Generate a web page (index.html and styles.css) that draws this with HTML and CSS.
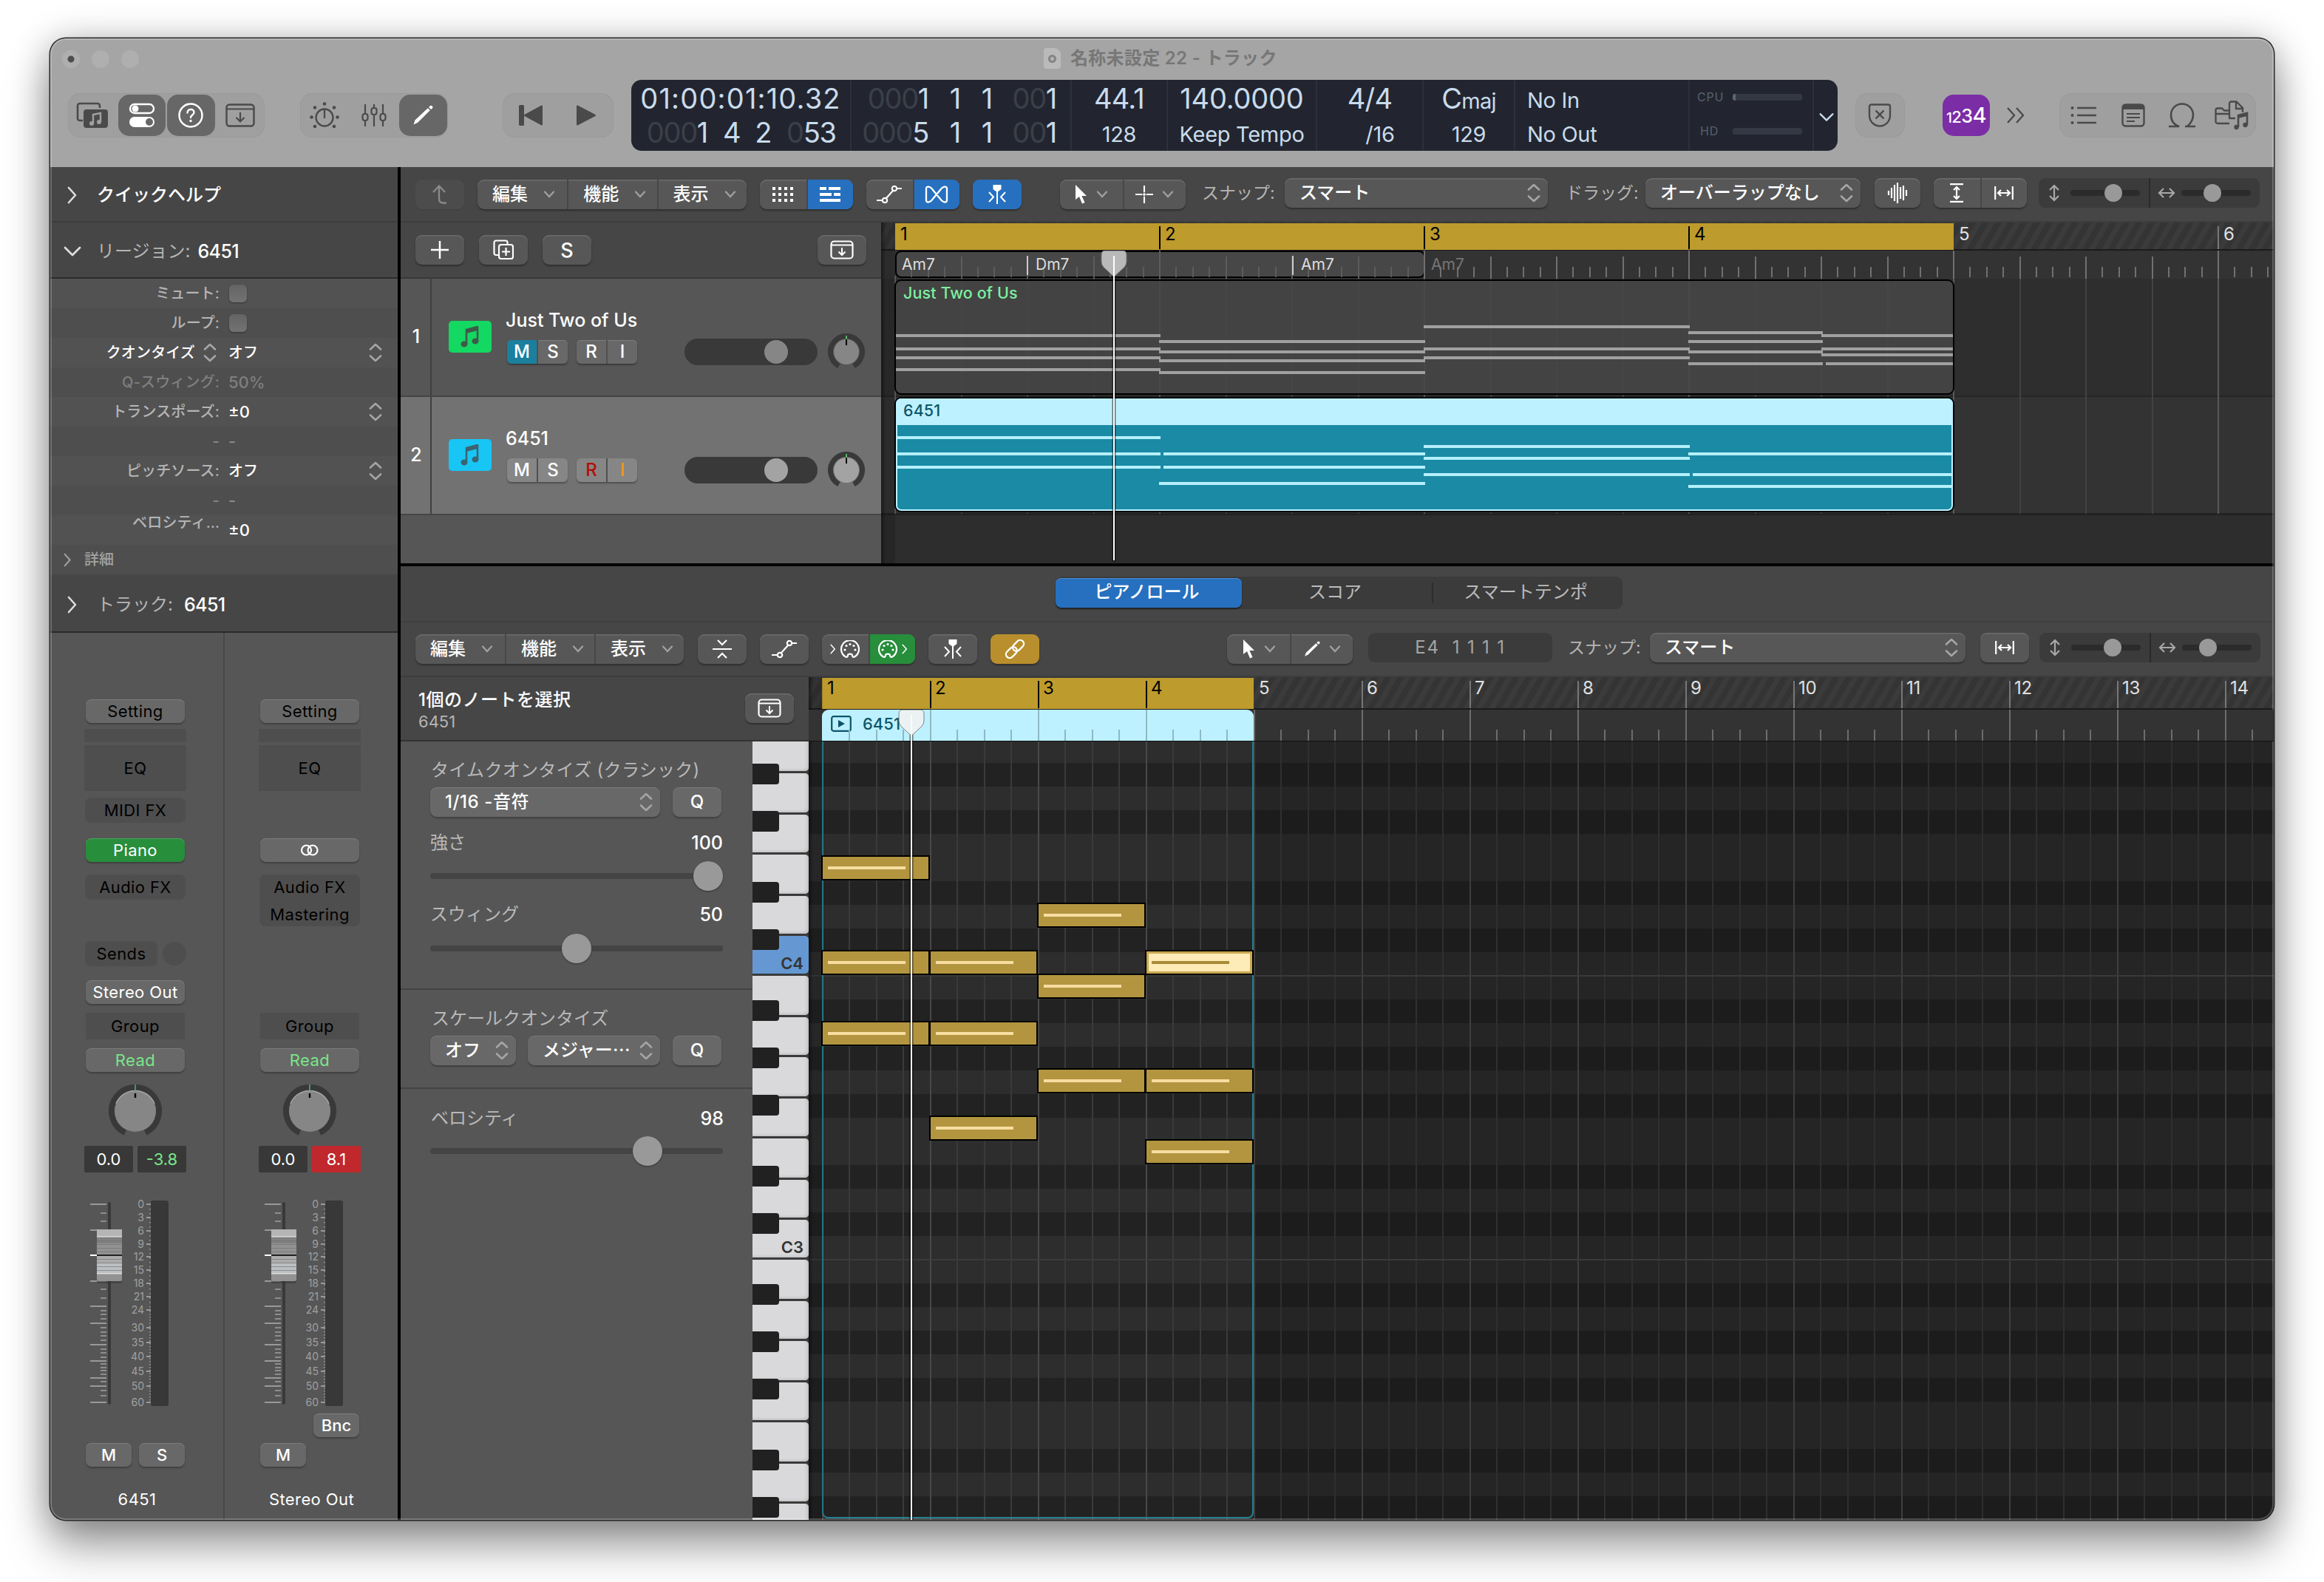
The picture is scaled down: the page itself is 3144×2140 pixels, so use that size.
FILE: index.html
```html
<!DOCTYPE html>
<html lang="ja">
<head>
    <meta charset="utf-8">
    <title>名称未設定 22 - トラック</title>
    <link rel="stylesheet" href="styles.css">
</head>
<body>
<!-- Icon sprite -->
<svg class="sprite">
    <symbol id="right" viewBox="0 0 14 24"><path d="M2 2l9 10-9 10" fill="none" stroke="currentColor" stroke-width="2.6" stroke-linecap="round" stroke-linejoin="round"/></symbol>
    <symbol id="down" viewBox="0 0 24 14"><path d="M2 2l10 10L22 2" fill="none" stroke="currentColor" stroke-width="2.8" stroke-linecap="round" stroke-linejoin="round"/></symbol>
    <symbol id="step" viewBox="0 0 18 26"><path d="M2 8.500l7-6.500 7 6.500M2 17.500l7 6.500 7-6.500" fill="none" stroke="currentColor" stroke-width="2.600" stroke-linecap="round" stroke-linejoin="round"/></symbol>
    <symbol id="library" viewBox="0 0 44 36"><path d="M9 25H5a3 3 0 0 1-3-3V5a3 3 0 0 1 3-3h24a3 3 0 0 1 3 3v3" fill="none" stroke="currentColor" stroke-width="2.6"/><rect x="10" y="10" width="33" height="25" rx="4" fill="currentColor"/><path d="M23 29V17l10-2v12" fill="none" stroke="#a0a0a0" stroke-width="2.4"/><circle cx="21" cy="29" r="3" fill="#a0a0a0"/><circle cx="31" cy="27" r="3" fill="#a0a0a0"/></symbol>
    <symbol id="toggles" viewBox="0 0 36 34"><rect x="2" y="2" width="32" height="12" rx="6" fill="none" stroke="#fff" stroke-width="2.4"/><circle cx="9" cy="8" r="4.500" fill="#fff"/><rect x="1" y="19" width="34" height="14" rx="7" fill="#fff"/><circle cx="28" cy="26" r="5" fill="#676767"/></symbol>
    <symbol id="help" viewBox="0 0 36 36"><circle cx="18" cy="18" r="15.500" fill="none" stroke="#fff" stroke-width="2.500"/><path d="M13.500 14.500c0-6 9-6 9-.500 0 3.500-4.500 3.500-4.500 7" fill="none" stroke="#fff" stroke-width="2.400" stroke-linecap="round"/><circle cx="18" cy="25.500" r="1.700" fill="#fff"/></symbol>
    <symbol id="tray" viewBox="0 0 40 32"><rect x="1.500" y="1.500" width="37" height="29" rx="4" fill="none" stroke="currentColor" stroke-width="2.400"/><path d="M2 7.500h36M20 12v12M14.500 19l5.500 5.500 5.500-5.500" fill="none" stroke="currentColor" stroke-width="2.200"/></symbol>
    <symbol id="traysm" viewBox="0 0 32 26"><rect x="1.500" y="1.500" width="29" height="23" rx="4" fill="none" stroke="currentColor" stroke-width="2.200"/><path d="M2 6.500h28M16 10v9M11.500 15.500l4.500 4.500 4.500-4.500" fill="none" stroke="currentColor" stroke-width="2"/></symbol>
    <symbol id="dial" viewBox="0 0 40 36"><circle cx="20" cy="21" r="11.500" fill="none" stroke="currentColor" stroke-width="2.300"/><path d="M20 11v11" stroke="currentColor" stroke-width="2.300"/><g fill="currentColor"><circle cx="20" cy="2.500" r="2.300"/><circle cx="7" cy="7.500" r="2.300"/><circle cx="33" cy="7.500" r="2.300"/><circle cx="2.500" cy="20.500" r="2.300"/><circle cx="37.500" cy="20.500" r="2.300"/><circle cx="7" cy="33" r="2.300"/><circle cx="33" cy="33" r="2.300"/></g></symbol>
    <symbol id="mixer" viewBox="0 0 34 32"><path d="M5 1v13M5 22v9M17 1v5M17 14v17M29 1v13M29 22v9" stroke="currentColor" stroke-width="2.200" fill="none"/><g fill="none" stroke="currentColor" stroke-width="2.200"><rect x="1.500" y="14" width="7" height="9" rx="3"/><rect x="13.500" y="6" width="7" height="9" rx="3"/><rect x="25.500" y="14" width="7" height="9" rx="3"/></g></symbol>
    <symbol id="pencil" viewBox="0 0 28 28"><path d="M1.500 26.500l2-6L20.800 4.200l3 3L7.200 23.700z" fill="currentColor"/><path d="M22 3l1.500-1.500a2.200 2.200 0 0 1 3.200 3.200L25 6z" fill="currentColor"/></symbol>
    <symbol id="rewind" viewBox="0 0 34 28"><rect x="1" y="0" width="7" height="28" rx="1.500" fill="currentColor"/><path d="M32 1.500v25L9 14z" fill="currentColor" stroke="currentColor" stroke-width="2" stroke-linejoin="round"/></symbol>
    <symbol id="play" viewBox="0 0 28 28"><path d="M2 1.500v25L26 14z" fill="currentColor" stroke="currentColor" stroke-width="2" stroke-linejoin="round"/></symbol>
    <symbol id="shield" viewBox="0 0 32 32"><path d="M4.500 1.500h23a2.500 2.500 0 0 1 2.500 2.500v12c0 9-7 14.500-14 14.500S2 25 2 16V4a2.500 2.500 0 0 1 2.500-2.500zM10.500 9.500l11 11M21.500 9.500l-11 11" fill="none" stroke="currentColor" stroke-width="2.400"/></symbol>
    <symbol id="more" viewBox="0 0 26 24"><path d="M2 2l9 10-9 10M14 2l9 10-9 10" fill="none" stroke="currentColor" stroke-width="2.300"/></symbol>
    <symbol id="list" viewBox="0 0 36 26"><path d="M9 3h26M9 13h26M9 23h26" stroke="currentColor" stroke-width="2.600"/><g fill="currentColor"><circle cx="2.500" cy="3" r="2"/><circle cx="2.500" cy="13" r="2"/><circle cx="2.500" cy="23" r="2"/></g></symbol>
    <symbol id="notepad" viewBox="0 0 32 32"><rect x="1.500" y="1.500" width="29" height="29" rx="4" fill="none" stroke="currentColor" stroke-width="2.400"/><path d="M2 2h28v6H2z" fill="currentColor"/><path d="M7 14h18M7 19h18M7 24h11" stroke="currentColor" stroke-width="2"/></symbol>
    <symbol id="loop" viewBox="0 0 38 34"><path d="M1 32h14c-6-2-11-7-11-15.500C4 8 10.500 1.500 19 1.500S34 8 34 16.500c0 7-4 12-8 15.500M23 32h14" fill="none" stroke="currentColor" stroke-width="2.600"/></symbol>
    <symbol id="media" viewBox="0 0 46 40"><path d="M20 31H4a2.500 2.500 0 0 1-2.500-2.500V13A2.500 2.500 0 0 1 4 10.500h6l3 3h6M2 18h17M20 25V4a2.500 2.500 0 0 1 2.500-2.500h7L38 10v6M29 2v9h8M20 24h8" fill="none" stroke="currentColor" stroke-width="2.300"/><path d="M32 36V20l12-3v16" fill="none" stroke="currentColor" stroke-width="2.600"/><path d="M32 20l12-3v4l-12 3z" fill="currentColor"/><circle cx="29.500" cy="36" r="3.200" fill="currentColor"/><circle cx="41.500" cy="33" r="3.200" fill="currentColor"/></symbol>
    <symbol id="back" viewBox="0 0 22 26"><path d="M10 1.500V19c0 3.500 2 5.500 6 5.500h4M2 10l8-8.500 8 8.500" fill="none" stroke="currentColor" stroke-width="2.300"/></symbol>
    <symbol id="caret" viewBox="0 0 16 10"><path d="M2 1.500l6 6.500 6-6.500" fill="none" stroke="currentColor" stroke-width="2.300" stroke-linecap="round"/></symbol>
    <symbol id="dots" viewBox="0 0 28 20"><g fill="currentColor"><path d="M0 0h4v4H0zM8 0h4v4H8zM16 0h4v4h-4zM24 0h4v4h-4zM0 8h4v4H0zM8 8h4v4H8zM16 8h4v4h-4zM24 8h4v4h-4zM0 16h4v4H0zM8 16h4v4H8zM16 16h4v4h-4zM24 16h4v4h-4z"/></g></symbol>
    <symbol id="rows" viewBox="0 0 28 20"><path d="M0 0h9v4H0zM12 0h16v4H12zM0 8h16v4H0zM19 8h9v4h-9zM0 16h28v4H0z" fill="currentColor"/></symbol>
    <symbol id="auto" viewBox="0 0 34 24"><g fill="none" stroke="currentColor" stroke-width="2.200"><path d="M0 20h8M13 17L22 7M27 4h7"/><circle cx="11" cy="20" r="3.200"/><circle cx="24" cy="4" r="3.200"/></g></symbol>
    <symbol id="flex" viewBox="0 0 32 24"><path d="M2 4c0-4 6-3 9 2l10 12c3 5 9 6 9 2V4c0-4-6-3-9 2L11 18c-3 5-9 6-9 2z" fill="none" stroke="currentColor" stroke-width="2.300"/></symbol>
    <symbol id="catch" viewBox="0 0 26 26"><path d="M7.500 0h11v6L13 10 7.500 6z" fill="currentColor"/><path d="M13 6v20M2 10l6 6.500L2 23M24 10l-6 6.500 6 6.500" fill="none" stroke="currentColor" stroke-width="2"/></symbol>
    <symbol id="pointer" viewBox="0 0 18 26"><path d="M2 0v20l5-4 4 9.500 3.500-1.500-4-9h6.500z" fill="currentColor"/></symbol>
    <symbol id="cross" viewBox="0 0 26 26"><path d="M0 13h10M16 13h10M13 0v10M13 16v10" stroke="currentColor" stroke-width="2.300"/><circle cx="13" cy="13" r="2" fill="currentColor"/></symbol>
    <symbol id="wave" viewBox="0 0 28 28"><path d="M2 11v6M6 7v14M10 3v22M14 0v28M18 6v16M22 4v20M26 10v8" stroke="currentColor" stroke-width="2.200"/></symbol>
    <symbol id="vfit" viewBox="0 0 20 26"><path d="M1 1.200h18M1 24.800h18M10 5v16M6 9l4-4 4 4M6 17l4 4 4-4" fill="none" stroke="currentColor" stroke-width="2.200"/></symbol>
    <symbol id="hfit" viewBox="0 0 26 20"><path d="M1.200 1v18M24.800 1v18M5 10h16M9 6l-4 4 4 4M17 6l4 4-4 4" fill="none" stroke="currentColor" stroke-width="2.200"/></symbol>
    <symbol id="vzoom" viewBox="0 0 16 24"><path d="M8 2v20M2 8l6-6 6 6M2 16l6 6 6-6" fill="none" stroke="currentColor" stroke-width="2.200"/></symbol>
    <symbol id="hzoom" viewBox="0 0 24 16"><path d="M2 8h20M8 2L2 8l6 6M16 2l6 6-6 6" fill="none" stroke="currentColor" stroke-width="2.200"/></symbol>
    <symbol id="plus" viewBox="0 0 22 22"><path d="M11 0v22M0 11h22" stroke="currentColor" stroke-width="2.300"/></symbol>
    <symbol id="dup" viewBox="0 0 28 28"><path d="M7 21H4a2.500 2.500 0 0 1-2.500-2.500V4A2.500 2.500 0 0 1 4 1.500h13A2.500 2.500 0 0 1 19.500 4v3" fill="none" stroke="currentColor" stroke-width="2.200"/><rect x="8" y="7" width="19" height="19" rx="3" fill="none" stroke="currentColor" stroke-width="2.200"/><path d="M17.500 11v11M12 16.500h11" stroke="currentColor" stroke-width="2.200"/></symbol>
    <symbol id="note" viewBox="0 0 26 30"><path d="M8 24V5l15-4v19" fill="none" stroke="currentColor" stroke-width="2.600"/><path d="M8 5l15-4v5L8 10z" fill="currentColor"/><ellipse cx="5" cy="24.500" rx="4.500" ry="4" fill="currentColor"/><ellipse cx="20" cy="20.500" rx="4.500" ry="4" fill="currentColor"/></symbol>
    <symbol id="collapse" viewBox="0 0 26 26"><path d="M0 13h26M7 1l6 6 6-6M7 25l6-6 6 6" fill="none" stroke="currentColor" stroke-width="2.200"/></symbol>
    <symbol id="midi" viewBox="0 0 28 24"><path d="M8 22.500A12 12 0 1 1 20 22.500c-2 1-3-.500-3-2 0-2.500-6-2.500-6 0 0 1.500-1 3-3 2z" fill="none" stroke="currentColor" stroke-width="2.200"/><g fill="currentColor"><circle cx="14" cy="5.500" r="1.600"/><circle cx="9" cy="7.500" r="1.600"/><circle cx="19" cy="7.500" r="1.600"/><circle cx="7" cy="13" r="1.600"/><circle cx="21" cy="13" r="1.600"/></g></symbol>
    <symbol id="link" viewBox="0 0 28 28"><g fill="none" stroke="currentColor" stroke-width="2.300" transform="rotate(-45 14 14)"><rect x="-1" y="9" width="17" height="10" rx="5"/><rect x="12" y="9" width="17" height="10" rx="5"/></g></symbol>
    <symbol id="rings" viewBox="0 0 26 16"><circle cx="8.500" cy="8" r="6.500" fill="none" stroke="#fff" stroke-width="2.200"/><circle cx="17" cy="8" r="6.500" fill="none" stroke="#fff" stroke-width="2.200"/></symbol>
    <symbol id="playbox" viewBox="0 0 28 22"><rect x="1.200" y="1.200" width="25.600" height="19.600" rx="2.500" fill="none" stroke="currentColor" stroke-width="2.200"/><path d="M10 6v10l9-5z" fill="currentColor"/></symbol>
    <symbol id="head" viewBox="0 0 36 36"><path d="M6 0h24q5 0 5 6v9q0 4-3 7.500L18 35.500 4 22.500Q1 19 1 15V6q0-6 5-6z" fill="currentColor" stroke="#777" stroke-width="1"/><path d="M18 7v29" stroke="#fff" stroke-width="2"/></symbol>
    <symbol id="knob" viewBox="-36 -36 72 72"><path d="M-13.500 29A32 32 0 1 1 13.500 29" fill="none" stroke="#393939" stroke-width="8"/><circle r="28" fill="#868686"/><path d="M-26-10A28 28 0 0 1 26-10" fill="none" stroke="#a5a5a5" stroke-width="1.500"/><path d="M0-36v9" stroke="#5fae6c" stroke-width="1.500"/><path d="M0-24v6" stroke="#000" stroke-width="2.400"/></symbol>
    <symbol id="pan" viewBox="-26 -26 52 52"><path d="M-10 19A21.500 21.500 0 1 1 10 19" fill="none" stroke="#393939" stroke-width="7"/><circle r="17" fill="currentColor"/><path d="M0-22v5" stroke="#5fd273" stroke-width="1.600"/><path d="M0-17v8" stroke="#000" stroke-width="2"/></symbol>
</svg>

<div class="window">
    <!-- Title bar + control bar -->
    <header class="titlebar">
        <div class="title-row">
            <div class="lights"><i class="edited"></i><i></i><i></i></div>
            <div class="doc-title"><span class="doc-icon"></span><span>名称未設定 22 - トラック</span></div>
        </div>
        <div class="controlbar">
            <div class="cb-group g1">
                <span class="cb"><svg width="44" height="36"><use href="#library"/></svg></span>
                <span class="cb on"><svg width="36" height="34"><use href="#toggles"/></svg></span>
                <span class="cb on"><svg width="36" height="36"><use href="#help"/></svg></span>
                <span class="cb"><svg width="40" height="32"><use href="#tray"/></svg></span>
            </div>
            <div class="cb-group g2">
                <span class="cb"><svg width="40" height="36"><use href="#dial"/></svg></span>
                <span class="cb"><svg width="34" height="32"><use href="#mixer"/></svg></span>
                <span class="cb on"><svg width="28" height="28"><use href="#pencil"/></svg></span>
            </div>
            <div class="cb-group g3">
                <span class="cb wide"><svg width="34" height="28"><use href="#rewind"/></svg></span>
                <span class="cb wide"><svg width="28" height="28"><use href="#play"/></svg></span>
            </div>
            <div class="lcd">
                <div class="cell c-time">
                    <div class="big smpte">01:00:01:10.32</div>
                    <div class="pos"><b class="q"><s>000</s>1</b><b>4</b><b>2</b><b class="t"><s>0</s>53</b></div>
                </div>
                <div class="cell c-loc">
                    <div class="pos"><b class="q"><s>000</s>1</b><b>1</b><b>1</b><b class="t"><s>00</s>1</b></div>
                    <div class="pos"><b class="q"><s>000</s>5</b><b>1</b><b>1</b><b class="t"><s>00</s>1</b></div>
                </div>
                <div class="cell c-rate"><div class="big">44.1</div><div class="small">128</div></div>
                <div class="cell c-tempo"><div class="big">140.0000</div><div class="small">Keep Tempo</div></div>
                <div class="cell c-sig"><div class="big">4/4</div><div class="small">/16</div></div>
                <div class="cell c-key"><div class="big">C<span class="maj">maj</span></div><div class="small">129</div></div>
                <div class="cell c-io"><div class="small io">No In</div><div class="small">No Out</div></div>
                <div class="cell c-load">
                    <div class="load"><span>CPU</span><i class="cpu"></i></div>
                    <div class="load"><span>HD</span><i></i></div>
                </div>
                <div class="c-more"><svg width="20" height="13"><use href="#down"/></svg></div>
            </div>
            <div class="cb-group g4"><span class="cb"><svg width="32" height="32"><use href="#shield"/></svg></span></div>
            <div class="countin"><span>1</span><span>2</span><span>3</span><span>4</span></div>
            <svg class="more" width="26" height="24"><use href="#more"/></svg>
            <div class="cb-group g5">
                <span class="cb"><svg width="36" height="26"><use href="#list"/></svg></span>
                <span class="cb"><svg width="32" height="32"><use href="#notepad"/></svg></span>
                <span class="cb"><svg width="38" height="34"><use href="#loop"/></svg></span>
                <span class="cb"><svg width="46" height="40"><use href="#media"/></svg></span>
            </div>
        </div>
    </header>

    <div class="content">
        <!-- Inspector -->
        <aside class="inspector">
            <div class="sec-head"><svg class="ic-r" width="14" height="24"><use href="#right"/></svg><span class="w">クイックヘルプ</span></div>
            <div class="sec-head open"><svg class="ic-d" width="24" height="14"><use href="#down"/></svg><span>リージョン:</span><b>6451</b></div>
            <div class="params">
                <div class="prow"><label>ミュート:</label><i class="check"></i></div>
                <div class="prow"><label>ループ:</label><i class="check"></i></div>
                <div class="prow"><label class="menu">クオンタイズ<svg width="18" height="26"><use href="#step"/></svg></label><em class="jp">オフ</em><svg class="st" width="18" height="26"><use href="#step"/></svg></div>
                <div class="prow off"><label>Q-スウィング:</label><em>50%</em></div>
                <div class="prow"><label>トランスポーズ:</label><em>±0</em><svg class="st" width="18" height="26"><use href="#step"/></svg></div>
                <div class="prow dash"><label>-</label><em>-</em></div>
                <div class="prow"><label>ピッチソース:</label><em class="jp">オフ</em><svg class="st" width="18" height="26"><use href="#step"/></svg></div>
                <div class="prow dash"><label>-</label><em>-</em></div>
                <div class="prow"><label class="raise">ベロシティ…</label><em>±0</em></div>
                <div class="prow detail"><svg width="11" height="19"><use href="#right"/></svg><span>詳細</span></div>
            </div>
            <div class="sec-head track-head"><svg class="ic-r" width="14" height="24"><use href="#right"/></svg><span>トラック:</span><b>6451</b></div>
            <div class="strips">
                <div class="strip">
                    <div class="sbtn first">Setting</div>
                    <div class="thin"></div>
                    <div class="eq">EQ</div>
                    <div class="inset midi">MIDI FX</div>
                    <div class="sbtn inst green">Piano</div>
                    <div class="fx"><div class="inset">Audio FX</div></div>
                    <div class="sends"><div class="inset">Sends</div><i></i></div>
                    <div class="sbtn out">Stereo Out</div>
                    <div class="group">Group</div>
                    <div class="sbtn read">Read</div>
                    <svg class="knob" width="72" height="72"><use href="#knob"/></svg>
                    <div class="vals"><span>0.0</span><span class="pk">-3.8</span></div>
                    <svg class="fader" width="138" height="288"></svg>
                    <div class="bnc"></div>
                    <div class="ms"><span>M</span><span>S</span></div>
                    <div class="sname">6451</div>
                </div>
                <div class="strip">
                    <div class="sbtn first">Setting</div>
                    <div class="thin"></div>
                    <div class="eq">EQ</div>
                    <div class="midi blank"></div>
                    <div class="sbtn inst"><svg width="26" height="16"><use href="#rings"/></svg></div>
                    <div class="fx"><div class="inset two"><span>Audio FX</span><span>Mastering</span></div></div>
                    <div class="sends"></div>
                    <div class="out blank"></div>
                    <div class="group">Group</div>
                    <div class="sbtn read">Read</div>
                    <svg class="knob" width="72" height="72"><use href="#knob"/></svg>
                    <div class="vals"><span>0.0</span><span class="clip">8.1</span></div>
                    <svg class="fader" width="138" height="288"></svg>
                    <div class="bnc"><span>Bnc</span></div>
                    <div class="ms"><span>M</span></div>
                    <div class="sname">Stereo Out</div>
                </div>
            </div>
        </aside>

        <main class="main">
            <!-- Tracks area -->
            <section class="tracks">
                <div class="toolbar">
                    <div class="seg ghost"><span><svg width="22" height="26"><use href="#back"/></svg></span></div>
                    <div class="seg menus"><span>編集<svg width="16" height="10"><use href="#caret"/></svg></span><span>機能<svg width="16" height="10"><use href="#caret"/></svg></span><span>表示<svg width="16" height="10"><use href="#caret"/></svg></span></div>
                    <div class="seg"><span><svg width="28" height="20"><use href="#dots"/></svg></span><span class="blue"><svg width="28" height="20"><use href="#rows"/></svg></span></div>
                    <div class="seg"><span><svg width="34" height="24"><use href="#auto"/></svg></span><span class="blue"><svg width="32" height="24"><use href="#flex"/></svg></span></div>
                    <div class="seg"><span class="blue"><svg width="26" height="26"><use href="#catch"/></svg></span></div>
                    <div class="seg tools"><span><svg width="18" height="26"><use href="#pointer"/></svg><svg width="16" height="10"><use href="#caret"/></svg></span><span><svg width="24" height="24"><use href="#cross"/></svg><svg width="16" height="10"><use href="#caret"/></svg></span></div>
                    <label class="lab snap up">スナップ:</label>
                    <div class="select snapsel up">スマート<svg width="18" height="26"><use href="#step"/></svg></div>
                    <label class="lab drag up">ドラッグ:</label>
                    <div class="select dragsel up">オーバーラップなし<svg width="18" height="26"><use href="#step"/></svg></div>
                    <div class="seg up"><span class="n62"><svg width="28" height="28"><use href="#wave"/></svg></span></div>
                    <div class="seg up"><span><svg width="20" height="26"><use href="#vfit"/></svg></span><span><svg width="26" height="20"><use href="#hfit"/></svg></span></div>
                    <div class="zoom up"><div><svg width="16" height="24"><use href="#vzoom"/></svg><i><u style="left:46px"></u></i></div><div><svg width="24" height="16"><use href="#hzoom"/></svg><i><u style="left:30px"></u></i></div></div>
                </div>
                <div class="tracks-body">
                    <div class="track-list">
                        <div class="list-head">
                            <div class="seg"><span><svg width="24" height="24"><use href="#plus"/></svg></span></div>
                            <div class="seg"><span><svg width="28" height="28"><use href="#dup"/></svg></span></div>
                            <div class="seg"><span class="ltr">S</span></div>
                            <div class="seg last"><span><svg width="32" height="26"><use href="#traysm"/></svg></span></div>
                        </div>
                        <div class="track">
                            <div class="num">1</div>
                            <div class="t-icon"><svg width="26" height="30"><use href="#note"/></svg></div>
                            <div class="t-mid"><div class="t-name">Just Two of Us</div><div class="t-btns"><p><span class="mute">M</span><span>S</span></p><p><span>R</span><span>I</span></p></div></div>
                            <div class="vol"><i></i></div>
                            <svg class="pan" width="52" height="52"><use href="#pan"/></svg>
                        </div>
                        <div class="track sel">
                            <div class="num">2</div>
                            <div class="t-icon cyan"><svg width="26" height="30"><use href="#note"/></svg></div>
                            <div class="t-mid"><div class="t-name">6451</div><div class="t-btns"><p><span>M</span><span>S</span></p><p><span class="rec">R</span><span class="inp">I</span></p></div></div>
                            <div class="vol"><i></i></div>
                            <svg class="pan" width="52" height="52"><use href="#pan"/></svg>
                        </div>
                    </div>
                    <div class="arrange" id="arrange">
                        <div class="ruler">
                            <div class="cycle"></div>
                            <div class="bars" id="arrangeBars"></div>
                        </div>
                        <div class="chords"><div class="chord-on"></div><svg class="ticks" id="chordTicks" width="1884" height="38"></svg>
                            <span style="left:28px">Am7</span><span class="tk" style="left:197px">Dm7</span><span class="tk" style="left:556px">Am7</span><span class="dim" style="left:744px">Am7</span>
                        </div>
                        <div class="lanes">
                            <svg class="grid" id="arrangeGrid" width="1884" height="320"></svg>
                            <div class="region muted"><div class="r-name">Just Two of Us</div><div class="r-notes" id="notes1"></div></div>
                            <div class="region active"><div class="r-name">6451</div><div class="r-notes" id="notes2"></div></div>
                        </div>
                        <div class="edge"></div>
                        <div class="playhead"><svg width="36" height="36"><use href="#head"/></svg><i></i></div>
                    </div>
                </div>
            </section>

            <!-- Editor -->
            <section class="editor">
                <div class="tabs"><div class="tabset"><span class="cur">ピアノロール</span><span>スコア</span><span class="div">スマートテンポ</span></div></div>
                <div class="toolbar ed">
                    <div class="seg menus"><span>編集<svg width="16" height="10"><use href="#caret"/></svg></span><span>機能<svg width="16" height="10"><use href="#caret"/></svg></span><span>表示<svg width="16" height="10"><use href="#caret"/></svg></span></div>
                    <div class="seg"><span><svg width="26" height="26"><use href="#collapse"/></svg></span></div>
                    <div class="seg"><span><svg width="34" height="24"><use href="#auto"/></svg></span></div>
                    <div class="seg"><span><svg width="8" height="14"><use href="#right"/></svg><svg width="28" height="24"><use href="#midi"/></svg></span><span class="green"><svg width="28" height="24"><use href="#midi"/></svg><svg width="8" height="14"><use href="#right"/></svg></span></div>
                    <div class="seg"><span><svg width="26" height="26"><use href="#catch"/></svg></span></div>
                    <div class="seg"><span class="gold"><svg width="28" height="28"><use href="#link"/></svg></span></div>
                    <div class="seg tools"><span><svg width="18" height="26"><use href="#pointer"/></svg><svg width="16" height="10"><use href="#caret"/></svg></span><span><svg width="22" height="22"><use href="#pencil"/></svg><svg width="16" height="10"><use href="#caret"/></svg></span></div>
                    <div class="readout up">E4&nbsp; 1 1 1 1</div>
                    <label class="lab snap2 up">スナップ:</label>
                    <div class="select snapsel2 up">スマート<svg width="18" height="26"><use href="#step"/></svg></div>
                    <div class="seg up"><span><svg width="26" height="20"><use href="#hfit"/></svg></span></div>
                    <div class="zoom up"><div><svg width="16" height="24"><use href="#vzoom"/></svg><i><u style="left:44px"></u></i></div><div><svg width="24" height="16"><use href="#hzoom"/></svg><i><u style="left:23px"></u></i></div></div>
                </div>
                <div class="ed-body">
                    <div class="ed-left">
                        <div class="ed-head">
                            <div><div class="eh-title">1個のノートを選択</div><div class="eh-sub">6451</div></div>
                            <div class="seg"><span><svg width="32" height="26"><use href="#traysm"/></svg></span></div>
                        </div>
                        <div class="ed-cols">
                            <div class="note-insp">
                                <div class="ni-label l1">タイムクオンタイズ (クラシック)</div>
                                <div class="ni-row"><div class="select big-sel">1/16 -音符<svg width="18" height="26"><use href="#step"/></svg></div><div class="qbtn">Q</div></div>
                                <div class="ni-line l2"><span>強さ</span><b>100</b></div>
                                <div class="slider"><i style="left:356px"></i></div>
                                <div class="ni-line l3"><span>スウィング</span><b>50</b></div>
                                <div class="slider"><i style="left:178px"></i></div>
                                <hr class="h1">
                                <div class="ni-label l4">スケールクオンタイズ</div>
                                <div class="ni-row r2"><div class="select s1">オフ<svg width="18" height="26"><use href="#step"/></svg></div><div class="select s2">メジャー⋯<svg width="18" height="26"><use href="#step"/></svg></div><div class="qbtn">Q</div></div>
                                <hr class="h2">
                                <div class="ni-line l5"><span>ベロシティ</span><b>98</b></div>
                                <div class="slider"><i style="left:274px"></i></div>
                            </div>
                            <div class="keys" id="keys"></div>
                        </div>
                    </div>
                    <div class="roll">
                        <div class="ruler roll-ruler">
                            <div class="cycle"></div>
                            <div class="bars" id="rollBars"></div>
                        </div>
                        <div class="strip-bar">
                            <div class="rb"><svg width="28" height="22"><use href="#playbox"/></svg>6451</div>
                            <svg class="ticks" id="rollTicks" width="1982" height="44"></svg>
                        </div>
                        <div class="roll-grid">
                            <div class="in-region"></div>
                            <svg class="grid" id="rollGrid" width="1982" height="1054"></svg>
                            <div class="bounds"></div>
                            <div id="rollNotes"></div>
                        </div>
                        <div class="edge"></div>
                        <div class="playhead ph2"><svg width="36" height="36"><use href="#head"/></svg><i></i></div>
                    </div>
                </div>
            </section>
        </main>
    </div>
</div>
<script src="script.js"></script>
</body>
</html>
```

FILE: styles.css
```css
* { box-sizing: border-box; }
body {
    margin: 0;
    width: 3144px;
    height: 2140px;
    overflow: hidden;
    background: #fff;
    font-family: Inter, "Noto Sans CJK JP", sans-serif;
    font-size: 24px;
    line-height: 1;
    color: #fff;
    white-space: nowrap;
}
svg { display: block; flex: none; }
.sprite { display: none; }
b, em, i, u, s { font-style: normal; text-decoration: none; font-weight: 500; }

.window {
    position: relative;
    width: 3008px;
    height: 2004px;
    margin: 52px 0 0 68px;
    border-radius: 21px;
    overflow: hidden;
    background: #464646;
    box-shadow: 0 0 0 1.500px #2a2a2a, 0 36px 60px rgba(0,0,0,.36), 0 4px 50px rgba(0,0,0,.28);
}
.window::after {
    content: "";
    position: absolute;
    inset: 0;
    border-radius: 21px;
    box-shadow: inset 0 0 0 2px rgba(255,255,255,.22);
}

/* Title bar */
.titlebar { height: 174px; background: #a5a5a5; }
.title-row { position: relative; height: 56px; }
.lights { display: flex; gap: 16px; padding: 16px 0 0 16px; }
.lights i { width: 24px; height: 24px; border-radius: 50%; background: #afafaf; }
.lights .edited { background: radial-gradient(circle, #4d4d4d 0 4px, #afafaf 5px); }
.doc-title {
    position: absolute;
    left: 1344px;
    top: 12px;
    height: 30px;
    display: flex;
    align-items: center;
    gap: 13px;
    color: #777;
    font-size: 24px;
    font-weight: 600;
    letter-spacing: .3px;
}
.doc-icon { width: 23px; height: 28px; border-radius: 4px 9px 4px 4px; background: radial-gradient(circle at 50% 52%, #b5b5b5 0 2px, #858585 3px 5px, #bababa 6px); }

.controlbar { display: flex; align-items: center; height: 96px; padding-left: 24px; color: #4a4a4a; }
.cb-group { display: flex; align-items: center; gap: 2px; height: 60px; padding: 0 1px; border-radius: 17px; background: #9f9f9f; box-shadow: inset 0 0 0 1px #9a9a9a; }
.cb { display: flex; align-items: center; justify-content: center; width: 64.500px; height: 56px; border-radius: 15px; }
.cb.on { background: #676767; color: #fff; }
.cb.wide { width: 73px; }
.g1 { width: 266px; }
.g2 { width: 200px; margin-left: 48px; }
.g3 { width: 150px; margin-left: 74px; }
.g4 { width: 67px; margin-left: 24px; }
.g5 { width: 266px; margin-left: 46px; }
.more { margin-left: 22px; }
.countin { display: flex; align-items: baseline; justify-content: center; width: 64px; height: 56px; margin-left: 51px; padding-top: 13px; border-radius: 15px; background: #7b2da6; color: #fff; font-weight: 500; letter-spacing: -.5px; }
.countin span:nth-child(1) { font-size: 19px; }
.countin span:nth-child(2) { font-size: 22px; }
.countin span:nth-child(3) { font-size: 25px; }
.countin span:nth-child(4) { font-size: 29px; }

/* LCD */
.lcd { display: flex; width: 1632px; height: 96px; margin-left: 24px; border-radius: 14px; background: #22252f; color: #c9dbec; }
.cell { display: flex; flex-direction: column; padding-top: 2px; border-right: 2px solid #2c303b; text-align: center; }
.cell > div { height: 46px; line-height: 46px; }
.big { font-size: 38px; letter-spacing: -.7px; }
.small { font-size: 29px; padding-top: 3px; letter-spacing: -.3px; }
.io { font-size: 29px; }
.maj { font-size: 29px; }
.pos { display: flex; font-size: 38px; }
.pos b { width: 22px; font-weight: 400; text-align: right; margin-right: 21px; letter-spacing: -1.300px; }
.pos .q { width: 90px; }
.pos .t { width: 66px; margin: 0; }
.pos s { color: #3b3f49; font-weight: 400; }
.c-time { width: 298px; }
.c-time .pos { padding-left: 13px; }
.c-loc { width: 298px; }
.c-loc .pos { padding-left: 14px; }
.cell .smpte { letter-spacing: 1.200px; }
.c-rate { width: 130px; }
.c-tempo { width: 202px; }
.c-tempo .big { letter-spacing: -.2px; }
.c-sig { width: 144px; }
.c-sig .small { padding-left: 28px; }
.c-key { width: 124px; }
.c-io { width: 236px; text-align: left; padding-left: 16px; }
.c-load { width: 168px; padding-left: 9px; padding-top: 0; color: #566170; }
.cell .load { display: flex; align-items: center; font-size: 16px; letter-spacing: .8px; }
.load span { width: 49px; text-align: left; padding-left: 1px; }
.load + .load span { padding-left: 5px; }
.load i { width: 94px; height: 9px; border-radius: 3px; background: #343844; }
.load .cpu { background: linear-gradient(90deg, #5a6675 4px, #343844 4px); }
.c-more { display: flex; align-items: center; padding: 4px 0 0 7px; }

.content { display: flex; height: 1830px; }

/* Inspector */
.inspector { width: 470px; background: #464646; }
.sec-head { display: flex; align-items: center; height: 75px; padding-top: 3px; border-bottom: 2px solid #3d3d3d; color: #b5b5b5; font-size: 24px; }
.sec-head span { margin-left: 26px; }
.sec-head .w { color: #fff; font-weight: 500; }
.sec-head svg { color: #ddd; }
.sec-head b { margin-left: 10px; font-size: 25px; color: #fff; letter-spacing: -.6px; }
.ic-r { margin-left: 23px; }
.ic-d { margin-left: 18px; }
.sec-head .ic-d + span { margin-left: 21px; }
.sec-head.open { height: 76px; padding-top: 4px; border-bottom: 2px solid #2b2b2b; }
.sec-head.track-head { height: 79px; padding-top: 5px; border-bottom: 2px solid #2b2b2b; }
.sec-head.track-head b { margin-left: 15px; }
.params { height: 400px; border-bottom: 2px solid #3d3d3d; }
.prow { position: relative; display: flex; align-items: center; height: 40px; background: #525252; }
.prow:nth-child(even) { background: #4e4e4e; }
.prow label { display: flex; align-items: center; justify-content: flex-end; width: 229px; margin-right: 12px; font-size: 20px; color: #b5b5b5; font-weight: 500; letter-spacing: .15px; }
.prow label.menu { color: #fff; }
.prow label.menu svg { margin: 0 4px 0 11px; color: #a5a5a5; }
.prow em { font-size: 22px; width: 190px; }
.prow em.jp { font-size: 20px; }
.prow .st { color: #a5a5a5; }
.prow.off, .prow.off label { color: #7f7f7f; }
.prow.dash, .prow.dash label { color: #8a8a8a; }
.prow label.raise { padding-bottom: 20px; }
.check { width: 24px; height: 24px; margin-left: 1px; border-radius: 6px; background: linear-gradient(#646464, #727272); box-shadow: 0 1px 2px #333; }
.detail { color: #a2a2a2; padding-left: 18px; font-size: 20px; font-weight: 500; }
.detail span { margin-left: 17px; }

.strips { display: flex; height: 1200px; background: #565656; }
.strip { flex: none; width: 234px; padding-left: 46px; font-size: 22px; color: #000; letter-spacing: .4px; }
.strip:first-child { width: 236px; border-right: 2px solid #474747; }
.strip > div, .strip .inset { display: flex; align-items: center; justify-content: center; width: 138px; }
.strip .sbtn { width: 134px; height: 32px; margin-left: 2px; border-radius: 8px; background: #686868; box-shadow: 0 2px 2px #404040, inset 0 1px 0 #7d7d7d; }
.strip .sbtn.first { margin-top: 90px; }
.strip .thin { height: 18px; margin-top: 8px; background: #4e4e4e; }
.strip .eq { height: 62px; margin-top: 4px; background: #4e4e4e; }
.strip .inset { width: 136px; height: 34px; margin-left: 1px; border-radius: 8px; background: #4e4e4e; }
.strip .midi { height: 34px; margin-top: 9px; }
.strip .inst { margin-top: 21px; }
.strip .sbtn.green { background: #278e3c; color: #fff; box-shadow: 0 2px 2px #404040, inset 0 1px 0 #4aa55c; }
.strip .fx { height: 70px; margin-top: 17px; align-items: flex-start; justify-content: flex-start; }
.strip .two { flex-direction: column; justify-content: space-around; height: 70px; }
.two span + span { margin-top: 4px; }
.strip .sends { height: 34px; margin-top: 20px; justify-content: flex-start; }
.strip .sends .inset { width: 98px; }
.sends i { width: 32px; height: 32px; margin-left: 7px; border-radius: 50%; background: #4e4e4e; }
.strip .out { height: 32px; margin-top: 19px; color: #fff; }
.strip .group { width: 134px; margin: 12px 0 0 2px; height: 36px; background: #4e4e4e; }
.strip .read { margin-top: 12px; color: #79e68a; }
.knob { margin: 17px 0 0 33px; }
.strip .vals { height: 36px; margin-top: 11px; justify-content: space-between; color: #fff; letter-spacing: 0; }
.vals span { display: flex; align-items: center; justify-content: center; width: 66px; height: 36px; border-radius: 2px; background: #383838; }
.vals .pk { color: #79e68a; }
.vals .clip { background: #c0282d; }
.fader { margin-top: 34px; }
.strip .bnc { height: 32px; margin-top: 4px; justify-content: flex-end; }
.strip .ms { height: 32px; margin-top: 8px; justify-content: flex-start; }
.ms span, .bnc span { display: flex; align-items: center; justify-content: center; width: 62px; height: 32px; margin: 0 2px; border-radius: 8px; background: #686868; color: #fff; font-weight: 500; letter-spacing: 0; box-shadow: 0 2px 2px #404040, inset 0 1px 0 #7d7d7d; }
.ms span + span { margin-left: 8px; }
.strip .sname { height: 32px; margin-top: 28px; color: #fff; padding-left: 5px; }
.fader text { font-size: 14px; fill: #a0a0a0; text-anchor: end; letter-spacing: 0; }

.main { width: 2538px; border-left: 4px solid #000; }

/* Toolbars */
.toolbar { display: flex; align-items: center; height: 75px; padding: 1px 0 0 20px; border-bottom: 2px solid #3d3d3d; }
.toolbar .up { margin-bottom: 4px; }
.seg { display: flex; height: 40px; margin-right: 18px; border-radius: 9px; background: #575757; box-shadow: 0 2px 2px #303030, inset 0 1.500px 0 #6c6c6c; overflow: hidden; }
.seg span { display: flex; align-items: center; justify-content: center; width: 66px; }
.seg span + span { border-left: 2px solid #474747; }
.seg span:not(:only-child) { width: 63px; }
.seg .n62 { width: 62px; }
.seg.ghost { background: #4c4c4c; color: #8a8a8a; box-shadow: 0 1px 1px #404040; }
.seg.menus span { width: 121.300px; justify-content: flex-start; padding-left: 20px; font-weight: 500; }
.seg svg[width="16"] { color: #a0a0a0; }
.seg.menus svg { margin-left: 21px; }
.seg .blue { background: #2670bf; }
.seg .green { background: #278e3c; }
.seg .gold { background: #b98e2c; }
.seg .ltr { font-size: 27px; font-weight: 500; }
.seg.tools { margin-left: 34px; }
.seg.tools span { width: 85px; gap: 12px; }
.lab { color: #b5b5b5; font-size: 23px; }
.toolbar .snap { margin-left: 4px; width: 112px; }
.toolbar .drag { width: 108px; margin-left: 24px; }
.select { display: flex; align-items: center; justify-content: space-between; height: 40px; padding: 0 10px 0 20px; border-radius: 9px; background: #575757; font-weight: 500; box-shadow: 0 2px 2px #303030, inset 0 1.500px 0 #6c6c6c; }
.select svg { color: #a5a5a5; }
.snapsel { width: 356px; }
.dragsel { width: 291px; margin-right: 19px; }
.zoom { display: flex; height: 40px; margin-left: -2px; border-radius: 9px; background: #3b3b3b; color: #a8a8a8; }
.zoom > div { display: flex; align-items: center; justify-content: space-between; width: 149px; padding: 0 12px 0 13px; }
.zoom > div + div { width: 150px; padding-left: 10px; border-left: 2px solid #2a2a2a; }
.zoom i { position: relative; width: 94px; height: 8px; border-radius: 4px; background: #2b2b2b; }
.zoom u { position: absolute; top: -8px; width: 24px; height: 24px; border-radius: 50%; background: #999; }

/* Track list */
.tracks { height: 540px; border-bottom: 4px solid #000; overflow: hidden; }
.tracks-body { display: flex; height: 461px; }
.track-list { width: 650px; background: #565656; }
.list-head { display: flex; align-items: center; height: 76px; padding: 0 20px; border-bottom: 2px solid #383838; background: #464646; }
.list-head .seg { margin-right: 20px; }
.list-head .last { margin: 0 0 0 auto; }
.track { display: flex; height: 160px; border-bottom: 2px solid #454545; }
.track.sel { background: #727272; border-color: #454545; }
.num { width: 42px; border-right: 2px solid #404040; text-align: center; padding: 66px 0 0 2px; font-weight: 500; font-size: 25px; }
.t-icon { display: flex; align-items: center; justify-content: center; width: 58px; height: 43px; margin: 57px 0 0 23px; border-radius: 5px; background: #13d862; color: #3f5a48; }
.t-icon.cyan { background: #17c6f5; color: #3c6470; }
.t-mid { width: 178px; margin-left: 20px; padding-top: 42px; }
.t-name { height: 28px; line-height: 28px; margin-left: -1px; font-size: 25px; font-weight: 500; letter-spacing: 0; }
.t-btns { display: flex; gap: 12px; margin-top: 13px; padding-left: 1px; }
.t-btns p { display: flex; width: 82px; height: 32px; margin: 0; border-radius: 6px; overflow: hidden; background: #686868; box-shadow: 0 2px 2px #3c3c3c, inset 0 1px 0 #7d7d7d; }
.sel .t-btns p { background: #868686; box-shadow: 0 2px 2px #505050; }
.t-btns span { display: flex; flex: 1; align-items: center; justify-content: center; font-size: 24px; font-weight: 500; }
.t-btns span + span { border-left: 2px solid #505050; }
.mute { background: #1b7f9e; }
.rec { color: #b01005; }
.inp { color: #f0981e; }
.vol { position: relative; width: 180px; height: 36px; margin: 81px 0 0 63px; border-radius: 18px; background: #393939; }
.vol i { position: absolute; left: 108px; top: 2px; width: 32px; height: 32px; border-radius: 50%; background: #868686; }
.sel .vol i { background: #a3a3a3; }
.pan { margin: 73px 0 0 13px; color: #868686; }
.sel .pan { color: #a3a3a3; }

/* Arrange canvas */
.arrange { position: relative; width: 1884px; overflow: hidden; background: #2d2d2d; }
.ruler { position: relative; height: 38px; background: repeating-linear-gradient(120deg, #343434 0 8px, #3b3b3b 8px 15px); border-bottom: 2px solid #1b1b1b; }
.cycle { position: absolute; left: 19px; top: 1px; width: 1432px; height: 36px; background: #bd9b2d; }
.bars { position: relative; display: flex; height: 100%; padding-left: 19px; overflow: hidden; }
.bars span { flex: none; width: 358px; padding: 4px 0 0 7px; font-size: 24px; color: #000; letter-spacing: -.3px; }
.bars .out { color: #e0e0e0; }
.chords { position: relative; height: 38px; background: #333; font-size: 21px; color: #ddd; }
.chord-on { position: absolute; left: 19px; top: 0; width: 717px; height: 37px; border: 2px solid #000; border-radius: 8px; background: #474747; }
.ticks, .grid { position: absolute; left: 0; top: 0; }
.chords span { position: absolute; top: 7px; padding-bottom: 4px; line-height: 24px; }
.chords .tk { border-left: 2px solid #ccc; padding: 0 0 2px 10px; }
.chords .dim { color: #757575; }
.lanes { position: relative; height: 385px; background: linear-gradient(#2e2e2e 158px, #252525 158px 160px, #333 160px 317px, #222 317px 320px, #2d2d2d 320px); }
.region { position: absolute; left: 18px; width: 1434px; height: 156px; border: 2px solid #000; border-radius: 9px; overflow: hidden; }
.region.muted { top: 1px; background: #474747d8; color: #7cf0a0; }
.region.active { top: 160px; background: #1b8aa5; color: #0d5568; }
.region.active::after { content: ""; position: absolute; inset: 0; border: 2px solid #bdf1ff; border-radius: 7px; }
.active .r-name { background: #bdf1ff; }
.r-name { height: 36px; padding: 6px 0 0 10px; font-size: 21.500px; font-weight: 500; letter-spacing: .1px; }
.r-notes i { position: absolute; height: 4px; background: #a0a0a0; }
.active .r-notes i { background: #b5f0fb; }
.edge { position: absolute; left: 0; top: 0; bottom: 0; width: 19px; background: linear-gradient(90deg, rgba(0,0,0,.5), rgba(0,0,0,.15) 6px); }
.playhead { position: absolute; left: 297px; top: 38px; bottom: 0; width: 36px; color: #b9b9b9; }
.playhead i { display: block; width: 2px; height: 385px; margin-left: 17px; margin-top: -2px; background: #fff; box-shadow: 0 0 0 1.500px rgba(0,0,0,.5); }

/* Editor */
.editor { height: 1290px; }
.tabs { height: 76px; padding: 14px 0 0 886px; border-bottom: 2px solid #3f3f3f; }
.tabset { display: flex; align-items: center; width: 767px; height: 44px; border-radius: 9px; background: #3b3b3b; color: #bbb; }
.tabset span { width: 257px; height: 28px; line-height: 26px; padding-right: 5px; text-align: center; }
.tabset .cur { width: 252px; height: 40px; line-height: 38px; border-radius: 8px; background: #2670bf; color: #fff; font-weight: 500; font-size: 24px; box-shadow: 0 2px 2px #222, inset 0 1px 0 #4a8ad0; }
.tabset .div { border-left: 2px solid #2d2d2d; }
.toolbar.ed { height: 74px; padding-top: 0; }
.ed .seg:nth-child(4) span { gap: 5px; }
.ed .seg.menus { margin-right: 19px; }
.ed .seg.menus span { width: 121px; }
.ed .seg.tools { margin: 0 21px 0 236px; }
.readout { width: 249px; height: 40px; line-height: 40px; border-radius: 9px; background: #3b3b3b; color: #a5a5a5; text-align: center; font-size: 24px; letter-spacing: 1.800px; }
.snap2 { width: 111px; margin-left: 21px; }
.snapsel2 { width: 427px; margin-right: 20px; }
.toolbar.ed .zoom { margin-left: -4px; }
.ed-body { display: flex; height: 1140px; }
.ed-left { width: 552px; }
.ed-head { display: flex; align-items: flex-start; justify-content: space-between; height: 87px; padding: 17px 2px 0 24px; border-bottom: 2px solid #333; }
.ed-head .seg { margin-top: 5px; }
.eh-title { font-weight: 500; line-height: 28px; letter-spacing: .5px; }
.eh-sub { margin-top: 4px; font-size: 22px; color: #b5b5b5; }
.ed-cols { display: flex; height: 1053px; }
.note-insp { width: 476px; background: #565656; padding-left: 40px; }
.ni-label { height: 28px; line-height: 28px; color: #b9b9b9; }
.l1 { padding-left: 1px; margin-top: 25px; letter-spacing: .3px; }
.ni-row { display: flex; width: 394px; height: 40px; margin-top: 9px; }
.note-insp .select, .qbtn { background: #686868; box-shadow: 0 2px 2px #404040, inset 0 1px 0 #7a7a7a; }
.select.big-sel { width: 311px; margin-right: 17px; letter-spacing: .6px; }
.qbtn { width: 66px; border-radius: 9px; line-height: 40px; text-align: center; font-weight: 500; }
.ni-line { display: flex; justify-content: space-between; width: 396px; height: 28px; line-height: 28px; color: #b9b9b9; }
.ni-line b { color: #fff; font-size: 25px; }
.l2 { margin-top: 21px; }
.l3 { margin-top: 34px; }
.slider { position: relative; width: 396px; height: 8px; margin-top: 27px; border-radius: 4px; background: #444; }
.l3 + .slider { margin-top: 28px; }
.slider i { position: absolute; top: -16px; width: 40px; height: 40px; border-radius: 50%; background: #999; box-shadow: 0 1px 2px #333; }
.note-insp hr { margin: 0 0 0 -40px; border: 0; height: 2px; background: #434343; }
.note-insp .h1 { margin-top: 50px; }
.l4 { margin-top: 25px; padding-left: 2px; }
.s1 { width: 116px; margin-right: 16px; }
.s2 { width: 179px; margin-right: 17px; }
.note-insp .h2 { margin-top: 30px; }
.l5 { margin-top: 26px; padding-left: 1px; }
.l5 b { margin-right: -1px; }
.l5 + .slider { margin-top: 26px; }

/* Piano keys */
.keys { position: relative; width: 76px; overflow: hidden; background: #3a3a3a; }
.keys div { margin-bottom: 3px; border-radius: 0 5px 5px 0; background: #d9d9db; box-shadow: inset -3px -2px 3px #c4c4c8; color: #333; font-size: 22px; font-weight: 600; display: flex; align-items: flex-end; justify-content: flex-end; padding: 0 7px 3px 0; }
.keys .hit { background: #6598d2; box-shadow: none; }
.keys i { position: absolute; left: 0; width: 36px; height: 28px; border-radius: 0 4px 4px 0; background: #212121; }

/* Piano roll */
.roll { position: relative; width: 1982px; overflow: hidden; }
.roll-ruler.ruler { height: 44px; }
.roll-ruler .cycle { left: 18px; top: 1px; width: 584px; height: 42px; }
.roll-ruler .bars { padding-left: 18px; }
.roll-ruler .bars span { width: 146px; padding-top: 3px; }
.strip-bar { position: relative; z-index: 1; height: 43px; background: #333; border-bottom: 1px solid #111; }
.rb { position: absolute; left: 18px; top: 0; width: 584px; height: 42px; display: flex; align-items: center; padding: 0 0 4px 12px; gap: 15px; border-radius: 9px 9px 0 0; background: #bdf1ff; color: #0d5568; font-size: 22px; font-weight: 500; }
.roll-grid, .in-region { background: repeating-linear-gradient(#252525 0 32px, #1c1c1c 32px 64px, #252525 64px 96px, #1c1c1c 96px 128px, #252525 128px 192px, #1c1c1c 192px 224px, #252525 224px 256px, #1c1c1c 256px 288px, #252525 288px 352px, #1c1c1c 352px 384px); background-position: 0 -3px; background-size: 100% 384px; }
.roll-grid { position: relative; height: 1053px; }
.in-region { position: absolute; left: 0; top: 0; width: 602px; height: 100%; background-image: repeating-linear-gradient(#2d2d2d 0 32px, #222 32px 64px, #2d2d2d 64px 96px, #222 96px 128px, #2d2d2d 128px 192px, #222 192px 224px, #2d2d2d 224px 256px, #222 256px 288px, #2d2d2d 288px 352px, #222 352px 384px); }
.bounds { position: absolute; left: 18px; top: -10px; bottom: 2px; width: 584px; border: 2px solid #27808f; border-top: 0; border-radius: 0 0 8px 8px; }
.pnote { position: absolute; width: 147px; height: 34px; border: 2px solid #000; background: #b39540; }
.pnote::after { content: ""; position: absolute; left: 7px; top: 13px; width: 105px; height: 4px; background: #f7dda0; }
.pnote.picked { background: #fdebb8; box-shadow: inset 0 0 0 3px #c9a850; }
.pnote.picked::after { background: #a98b35; }
.playhead.ph2 { left: 121px; top: 44px; color: #f2f2f2; z-index: 2; }
.playhead.ph2 i { height: 100%; }
.ph2 svg { opacity: .9; }
```

FILE: script.js
```javascript
const $ = (id) => document.getElementById(id);

// vertical grid/tick lines, snapped to whole pixels
function vlines(svg, list) {
    svg.innerHTML += list.map(([x, y1, y2, c]) =>
        `<rect x="${Math.round(x) - 1}" y="${y1}" width="2" height="${y2 - y1}" fill="${c}"/>`).join('');
}

function addBars(el, count, lastCycle) {
    for (let n = 1; n <= count; n++) {
        el.innerHTML += `<span class="${n > lastCycle ? 'out' : ''}">${n}</span>`;
    }
}
addBars($('arrangeBars'), 6, 4);
addBars($('rollBars'), 14, 4);

// Arrange ruler and grid: 16 ticks per bar
const BAR = 358;
const ticks = [], grid = [];
for (let i = 0; i < 84; i++) {
    const x = 19 + i * BAR / 16;
    const shade = i < 32 ? '#5c5c5c' : '#707070';
    if (i % 16 === 0) ticks.push([x, i ? 0 : 34, 38, shade]);
    else if (i % 4 === 0) ticks.push([x, 8, 38, shade]);
    else ticks.push([x, 22, 36, shade]);
    if (i % 4 === 0) grid.push([x, 0, 318, i % 16 === 0 ? '#585858' : '#424242']);
}
vlines($('chordTicks'), ticks);
vlines($('arrangeGrid'), grid);

// bar lines in the number rows
function rulerMarks(holder, start, pitch, count, last, h) {
    let out = `<svg class="ticks" width="1982" height="${h}">`;
    for (let i = 1; i < count; i++) {
        if (i === last) continue;
        out += `<rect x="${Math.round(start + i * pitch) - 1}" y="5" width="2" height="${h - 5}" fill="${i < last ? '#000' : '#777'}"/>`;
    }
    holder.insertAdjacentHTML('beforeend', out + '</svg>');
}
rulerMarks($('arrangeBars'), 19, BAR, 6, 4, 37);
rulerMarks($('rollBars'), 18.5, 146, 14, 4, 43);

// Region note bars: [x, width, y]
function drawNotes(el, notes) {
    el.innerHTML = notes.map(([x, w, y]) => `<i style="left:${x}px;width:${w}px;top:${y}px"></i>`).join('');
}
drawNotes($('notes1'), [
    [0, 358, 72], [0, 358, 90], [0, 358, 102], [0, 358, 118],
    [356, 360, 80], [356, 360, 94], [356, 360, 106], [356, 360, 122],
    [714, 360, 60], [714, 360, 90], [714, 360, 102],
    [1072, 182, 68], [1072, 182, 80], [1072, 182, 94], [1072, 182, 110],
    [1252, 180, 72], [1252, 180, 90], [1252, 180, 98], [1258, 174, 110]
]);
drawNotes($('notes2'), [
    [0, 358, 51], [0, 358, 73], [0, 358, 91],
    [362, 354, 73], [362, 354, 91], [356, 360, 113],
    [714, 360, 63], [714, 360, 79], [714, 360, 101],
    [1072, 360, 73], [1078, 354, 101], [1072, 360, 117]
]);

// Piano roll ruler and grid: 4 ticks per bar
const rollTicks = [], rollGrid = [];
for (let i = 0; i < 54; i++) {
    const x = 18.5 + i * 36.5;
    const inside = i < 16;
    const c = inside ? '#8db9c4' : '#6c6c6c';
    if (i) rollTicks.push([x, i % 4 === 0 ? 0 : 27, 42, c]);
    if (inside) rollGrid.push([x, 0, 1053, i % 4 === 0 ? '#484848' : '#3a3a3a']);
    else rollGrid.push([x, 0, 1053, i % 4 === 0 ? '#3e3e3e' : '#2f2f2f']);
}
vlines($('rollTicks'), rollTicks);
vlines($('rollGrid'), rollGrid);
$('rollGrid').innerHTML += '<path d="M0 317h1982M0 701h1982" stroke="#3a3a3a" stroke-width="2"/>';

// Notes: [bar, lane top, picked]
[[0, 157], [0, 285], [0, 381], [1, 285], [1, 381], [1, 509],
 [2, 221], [2, 317], [2, 445], [3, 285, 1], [3, 445], [3, 541]].forEach(([bar, y, picked]) => {
    $('rollNotes').innerHTML += `<div class="pnote${picked ? ' picked' : ''}" style="left:${17 + bar * 146}px;top:${y - 3}px"></div>`;
});

// Keyboard, the top key is a cut-off A
const keys = $('keys');
const heights = [54, 56, 54, 56, 54, 54, 56];
const names = ['A', 'G', 'F', 'E', 'D', 'C', 'B'];
let keyTop = -11, oct = 4;
for (let k = 0; keyTop < 1053; k++) {
    const n = names[k % 7];
    const label = n === 'C' && oct > 2 ? 'C' + oct : '';
    keys.innerHTML += `<div class="${label === 'C4' ? 'hit' : ''}" style="height:${heights[k % 7] - 3}px;${k ? '' : 'margin-top:-11px'}">${label}</div>`;
    if (n === 'C') oct--;
    keyTop += heights[k % 7];
}
for (let o = 0; o < 3; o++) {
    [30, 94, 190, 254, 350].forEach((y) => {
        keys.innerHTML += `<i style="top:${y + o * 384}px"></i>`;
    });
}

// Channel strip faders
const scale = { 0: 9, 3: 27, 6: 45, 9: 63, 12: 80, 15: 98, 18: 116, 21: 134, 24: 152, 30: 176, 35: 196, 40: 215, 45: 235, 50: 255, 60: 277 };
const long = [9, 44, 113, 147, 170, 199, 221, 244, 255, 277];
const short = [21, 32, 124, 136, 153, 158, 164, 176, 182, 187, 193, 205, 210, 216, 225, 230, 234, 239, 249, 261, 268];
document.querySelectorAll('.fader').forEach((f) => {
    let s = '<rect x="32" y="6" width="4" height="274" rx="2" fill="#393939"/><rect x="90" y="4" width="24" height="278" rx="3" fill="#383838"/>';
    long.forEach((y) => { s += `<rect x="8" y="${y - 1}" width="22" height="2" fill="#999"/>`; });
    short.forEach((y) => { s += `<rect x="22" y="${y - 1}" width="8" height="2" fill="#8e8e8e"/>`; });
    for (const v in scale) {
        s += `<text x="81" y="${scale[v] + 5}">${v}</text><rect x="84" y="${scale[v] - 1}" width="6" height="2" fill="#999"/>`;
    }
    for (let y = 15; y < 275; y += y < 150 ? 6 : 4) s += `<rect x="88" y="${y}" width="2" height="1.500" fill="#8e8e8e"/>`;
    s += '<rect x="8" y="77" width="10" height="2" fill="#fff"/>';
    s += '<rect x="17" y="46" width="34" height="70" rx="2" fill="#333" opacity=".5"/><rect x="17" y="43" width="34" height="70" rx="2" fill="#929292"/><rect x="17" y="43" width="34" height="9" fill="#b5b5b5"/><rect x="17" y="52" width="34" height="1.500" fill="#d5d5d5"/><rect x="17" y="54" width="34" height="8" fill="#808080"/><rect x="17" y="79" width="34" height="10" fill="#acacac"/><rect x="17" y="89" width="34" height="14" fill="#bcbfc1"/><rect x="17" y="102" width="34" height="1.500" fill="#ddd"/>';
    for (let y = 58; y < 102; y += 5) s += `<rect x="17" y="${y}" width="34" height="1" fill="#6e6e6e" opacity=".6"/>`;
    s += '<rect x="17" y="77" width="34" height="2" fill="#222"/>';
    f.innerHTML = s;
});
```
